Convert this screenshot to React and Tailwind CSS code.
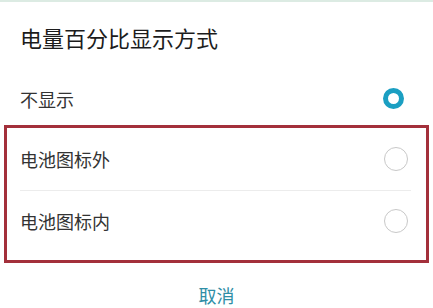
export default function App() {
  const font = { fontFamily: '"Noto Sans CJK SC", "Noto Sans", sans-serif' };
  return (
    <div
      className="w-[433px] h-[308px] bg-white border-t-[2px] border-[#dcebe3] overflow-hidden flex flex-col"
      style={font}
    >
      <div className="h-[70px] pl-[20px] pt-[20px] text-[22px] leading-[30px] text-[#1c1c1c]">
        电量百分比显示方式
      </div>
      <div className="h-[53px] flex items-center justify-between pl-[20px] pr-[29px]">
        <span className="text-[18px] leading-[24px] text-[#333]">不显示</span>
        <span className="w-[21px] h-[21px] rounded-full border-[5px] border-[#1b9fc2]" />
      </div>
      <div className="mx-[4px] border-[3px] border-[#a3303b] pb-[9px] flex flex-col">
        <div className="h-[62px] flex items-center justify-between pl-[13px] pr-[18px]">
          <span className="text-[18px] leading-[24px] text-[#333]">电池图标外</span>
          <span className="w-[24px] h-[24px] rounded-full border-[1.5px] border-[#c8c8c8]" />
        </div>
        <div className="ml-[13px] mr-[15px] h-px bg-[#ececec]" />
        <div className="h-[60px] flex items-center justify-between pl-[13px] pr-[18px]">
          <span className="text-[18px] leading-[24px] text-[#333]">电池图标内</span>
          <span className="w-[24px] h-[24px] rounded-full border-[1.5px] border-[#c8c8c8]" />
        </div>
      </div>
      <div className="mt-[20px] text-center text-[18px] leading-[24px] text-[#2f8ea6]">
        取消
      </div>
    </div>
  );
}
